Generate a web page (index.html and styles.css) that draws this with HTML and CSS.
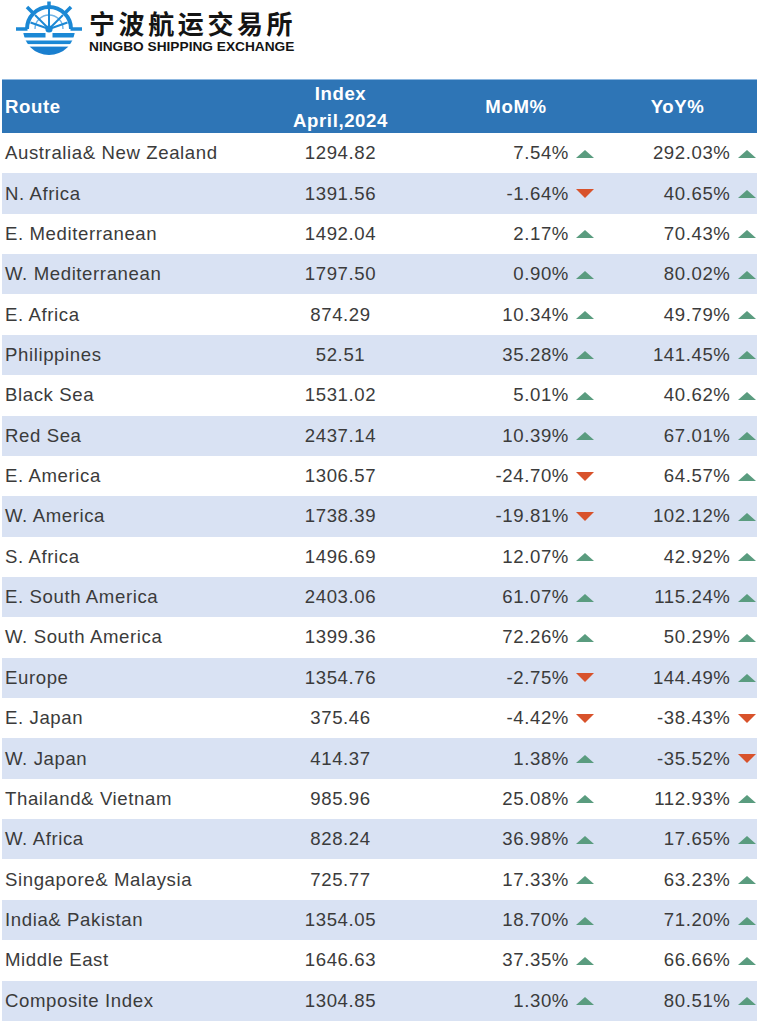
FILE: index.html
```html
<!DOCTYPE html>
<html lang="en">
<head>
<meta charset="utf-8">
<title>Ningbo Shipping Exchange - Route Index</title>
<link rel="stylesheet" href="styles.css">
</head>
<body>
<header class="brand">
  <svg class="logo" width="89" height="60" viewBox="0 0 89 60" aria-hidden="true">
    <defs>
      <clipPath id="lowclip"><circle cx="49" cy="29" r="26"/></clipPath>
    </defs>
    <g stroke="#1b88d5" fill="none" stroke-linecap="butt">
      <path d="M27 29 A22 22 0 0 1 71 29" stroke-width="4"/>
      <path d="M35 29 A14 14 0 0 1 63 29" stroke-width="1.4" stroke="#6fb3e6"/>
      <line x1="49" y1="1.5" x2="49" y2="7.5" stroke-width="3.5"/>
      <line x1="33.5" y1="13.5" x2="27" y2="7" stroke-width="3.5"/>
      <line x1="64.5" y1="13.5" x2="71" y2="7" stroke-width="3.5"/>
      <line x1="16" y1="29" x2="27.5" y2="29" stroke-width="3.5"/>
      <line x1="70.5" y1="29" x2="82" y2="29" stroke-width="3.5"/>
      <line x1="49" y1="29" x2="49" y2="9" stroke-width="2"/>
      <line x1="49" y1="29" x2="35" y2="15" stroke-width="2"/>
      <line x1="49" y1="29" x2="63" y2="15" stroke-width="2"/>
      <line x1="49" y1="29" x2="30.5" y2="22.5" stroke-width="2"/>
      <line x1="49" y1="29" x2="67.5" y2="22.5" stroke-width="2"/>
    </g>
    <circle cx="49" cy="29" r="3.6" fill="#1b88d5"/>
    <g clip-path="url(#lowclip)" fill="#1b88d5">
      <rect x="20" y="33" width="25.5" height="4.5"/>
      <rect x="52.5" y="33" width="26" height="4.5"/>
      <rect x="20" y="40.5" width="60" height="3.6"/>
      <rect x="20" y="46.6" width="60" height="10" fill="#1a7fcf"/>
    </g>
  </svg>
  <div class="brand-text">
    <div class="brand-cn">宁波航运交易所</div>
    <div class="brand-en">NINGBO SHIPPING EXCHANGE</div>
  </div>
</header>

<main class="table">
  <div class="thead">
    <div class="th th-route">Route</div>
    <div class="th th-index">Index<br>April,2024</div>
    <div class="th th-center">MoM%</div>
    <div class="th th-center th-yoy">YoY%</div>
  </div>

  <div class="row"><div class="c-route">Australia&amp; New Zealand</div><div class="c-index">1294.82</div><div class="c-pct">7.54%<span class="up"></span></div><div class="c-pct c-yoy">292.03%<span class="up"></span></div></div>
  <div class="row alt"><div class="c-route">N. Africa</div><div class="c-index">1391.56</div><div class="c-pct">-1.64%<span class="down"></span></div><div class="c-pct c-yoy">40.65%<span class="up"></span></div></div>
  <div class="row"><div class="c-route">E. Mediterranean</div><div class="c-index">1492.04</div><div class="c-pct">2.17%<span class="up"></span></div><div class="c-pct c-yoy">70.43%<span class="up"></span></div></div>
  <div class="row alt"><div class="c-route">W. Mediterranean</div><div class="c-index">1797.50</div><div class="c-pct">0.90%<span class="up"></span></div><div class="c-pct c-yoy">80.02%<span class="up"></span></div></div>
  <div class="row"><div class="c-route">E. Africa</div><div class="c-index">874.29</div><div class="c-pct">10.34%<span class="up"></span></div><div class="c-pct c-yoy">49.79%<span class="up"></span></div></div>
  <div class="row alt"><div class="c-route">Philippines</div><div class="c-index">52.51</div><div class="c-pct">35.28%<span class="up"></span></div><div class="c-pct c-yoy">141.45%<span class="up"></span></div></div>
  <div class="row"><div class="c-route">Black Sea</div><div class="c-index">1531.02</div><div class="c-pct">5.01%<span class="up"></span></div><div class="c-pct c-yoy">40.62%<span class="up"></span></div></div>
  <div class="row alt"><div class="c-route">Red Sea</div><div class="c-index">2437.14</div><div class="c-pct">10.39%<span class="up"></span></div><div class="c-pct c-yoy">67.01%<span class="up"></span></div></div>
  <div class="row"><div class="c-route">E. America</div><div class="c-index">1306.57</div><div class="c-pct">-24.70%<span class="down"></span></div><div class="c-pct c-yoy">64.57%<span class="up"></span></div></div>
  <div class="row alt"><div class="c-route">W. America</div><div class="c-index">1738.39</div><div class="c-pct">-19.81%<span class="down"></span></div><div class="c-pct c-yoy">102.12%<span class="up"></span></div></div>
  <div class="row"><div class="c-route">S. Africa</div><div class="c-index">1496.69</div><div class="c-pct">12.07%<span class="up"></span></div><div class="c-pct c-yoy">42.92%<span class="up"></span></div></div>
  <div class="row alt"><div class="c-route">E. South America</div><div class="c-index">2403.06</div><div class="c-pct">61.07%<span class="up"></span></div><div class="c-pct c-yoy">115.24%<span class="up"></span></div></div>
  <div class="row"><div class="c-route">W. South America</div><div class="c-index">1399.36</div><div class="c-pct">72.26%<span class="up"></span></div><div class="c-pct c-yoy">50.29%<span class="up"></span></div></div>
  <div class="row alt"><div class="c-route">Europe</div><div class="c-index">1354.76</div><div class="c-pct">-2.75%<span class="down"></span></div><div class="c-pct c-yoy">144.49%<span class="up"></span></div></div>
  <div class="row"><div class="c-route">E. Japan</div><div class="c-index">375.46</div><div class="c-pct">-4.42%<span class="down"></span></div><div class="c-pct c-yoy">-38.43%<span class="down"></span></div></div>
  <div class="row alt"><div class="c-route">W. Japan</div><div class="c-index">414.37</div><div class="c-pct">1.38%<span class="up"></span></div><div class="c-pct c-yoy">-35.52%<span class="down"></span></div></div>
  <div class="row"><div class="c-route">Thailand&amp; Vietnam</div><div class="c-index">985.96</div><div class="c-pct">25.08%<span class="up"></span></div><div class="c-pct c-yoy">112.93%<span class="up"></span></div></div>
  <div class="row alt"><div class="c-route">W. Africa</div><div class="c-index">828.24</div><div class="c-pct">36.98%<span class="up"></span></div><div class="c-pct c-yoy">17.65%<span class="up"></span></div></div>
  <div class="row"><div class="c-route">Singapore&amp; Malaysia</div><div class="c-index">725.77</div><div class="c-pct">17.33%<span class="up"></span></div><div class="c-pct c-yoy">63.23%<span class="up"></span></div></div>
  <div class="row alt"><div class="c-route">India&amp; Pakistan</div><div class="c-index">1354.05</div><div class="c-pct">18.70%<span class="up"></span></div><div class="c-pct c-yoy">71.20%<span class="up"></span></div></div>
  <div class="row"><div class="c-route">Middle East</div><div class="c-index">1646.63</div><div class="c-pct">37.35%<span class="up"></span></div><div class="c-pct c-yoy">66.66%<span class="up"></span></div></div>
  <div class="row alt"><div class="c-route">Composite Index</div><div class="c-index">1304.85</div><div class="c-pct">1.30%<span class="up"></span></div><div class="c-pct c-yoy">80.51%<span class="up"></span></div></div>
</main>
</body>
</html>
```

FILE: styles.css
```css
html, body {
  margin: 0;
  padding: 0;
  background: #ffffff;
}

body {
  font-family: "Liberation Sans", Arial, sans-serif;
  color: #3b3b3b;
}

.brand {
  display: flex;
  align-items: flex-start;
  height: 79px;
  box-sizing: border-box;
}

.logo {
  display: block;
  flex: none;
}

.brand-text {
  padding-top: 10px;
}

.brand-cn {
  font-family: "Noto Sans CJK SC", "Noto Sans", sans-serif;
  font-weight: 700;
  font-size: 26px;
  line-height: 26px;
  letter-spacing: 3.6px;
  color: #141414;
}

.brand-en {
  font-family: "Liberation Sans", Arial, sans-serif;
  font-weight: 700;
  font-size: 13.7px;
  line-height: 14px;
  margin-top: 4px;
  color: #141414;
}

.table {
  margin-left: 2px;
  width: 755px;
  font-size: 18.6px;
  letter-spacing: 0.6px;
}

.thead,
.row {
  display: grid;
  grid-template-columns: 248px 180px 172px 155px;
  align-items: center;
}

.thead {
  height: 54px;
  box-sizing: border-box;
  background: #2e75b6;
  border-top: 1px solid #8fb8e0;
  color: #ffffff;
  font-weight: 700;
}

.th-route {
  padding-left: 3px;
}

.th-index {
  text-align: center;
  line-height: 27px;
  padding-left: 1px;
}

.th-center {
  text-align: center;
}

.th-yoy {
  padding-right: 4px;
}

.row {
  height: 40.36px;
  background: #ffffff;
}

.row.alt {
  background: #d9e2f3;
}

.c-route {
  padding-left: 3px;
  white-space: nowrap;
}

.c-index {
  text-align: center;
  padding-left: 1px;
}

.c-pct {
  display: flex;
  justify-content: flex-end;
  align-items: center;
  padding-right: 8px;
  white-space: nowrap;
}

.c-yoy {
  padding-right: 1.5px;
}

.up,
.down {
  display: inline-block;
  width: 0;
  height: 0;
  margin-left: 7px;
  border-left: 9.5px solid transparent;
  border-right: 9.5px solid transparent;
}

.up {
  border-bottom: 8px solid #5a9c7f;
  margin-top: 1px;
}

.down {
  border-top: 9px solid #d8522b;
  margin-top: 0;
}
```
